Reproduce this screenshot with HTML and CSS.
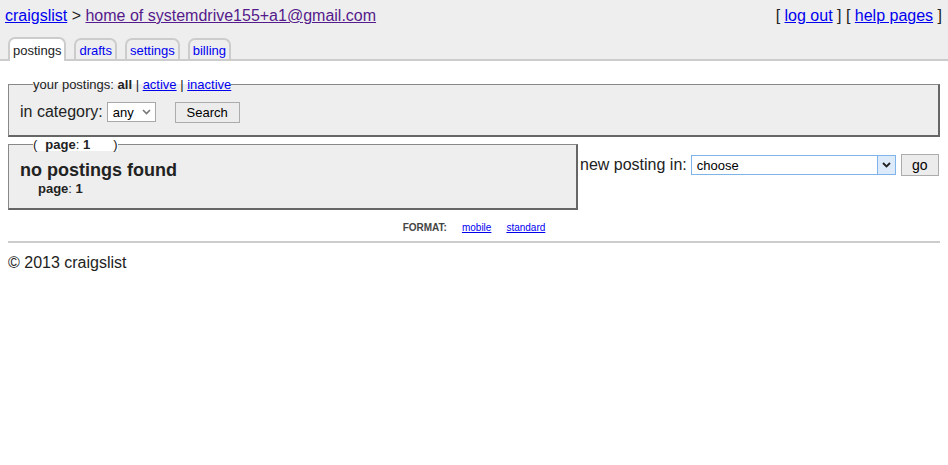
FILE: index.html
```html
<!DOCTYPE html>
<html>
<head>
<meta charset="utf-8">
<title>craigslist account</title>
<link rel="stylesheet" href="styles.css">
</head>
<body>
<div class="header">
  <div class="topbar">
    <div class="crumbs"><a class="lnk" href="#">craigslist</a> &gt; <a class="lnk visited" href="#">home of systemdrive155+a1@gmail.com</a></div>
    <div class="userlinks">[ <a class="lnk" href="#">log out</a> ] [ <a class="lnk" href="#">help pages</a> ]</div>
  </div>
  <div class="tabs">
    <a class="tab active" href="#">postings</a>
    <a class="tab" href="#">drafts</a>
    <a class="tab" href="#">settings</a>
    <a class="tab" href="#">billing</a>
  </div>
</div>
<div class="content">
  <fieldset class="box filter">
    <legend class="legend">your postings: <b>all</b> | <a class="lnk" href="#">active</a> | <a class="lnk" href="#">inactive</a></legend>
    <div class="filter-row">
      <label class="lbl">in category:</label>
      <span class="sel sel-small"><span class="sel-text">any</span><span class="sel-arrow"><svg width="9" height="6" viewBox="0 0 9 6"><path d="M1 1 L4.5 4.5 L8 1" fill="none" stroke="#777" stroke-width="1.6"/></svg></span></span>
      <button class="btn search">Search</button>
    </div>
  </fieldset>
  <div class="row">
    <fieldset class="box results">
      <legend class="legend page-legend">(<span class="pl-inner"><b>page</b>: <b>1</b></span>)</legend>
      <div class="none">no postings found</div>
      <div class="pageinfo"><b>page</b>: <b>1</b></div>
    </fieldset>
    <div class="newpost">
      <label class="lbl">new posting in:</label>
      <span class="sel sel-big"><span class="sel-text">choose</span><span class="sel-arrow blue"><svg width="9" height="6" viewBox="0 0 9 6"><path d="M1 1 L4.5 4.5 L8 1" fill="none" stroke="#222" stroke-width="1.8"/></svg></span></span>
      <button class="btn go">go</button>
    </div>
  </div>
  <div class="format"><span class="fmt-label">FORMAT:</span><a class="lnk" href="#">mobile</a><a class="lnk" href="#">standard</a></div>
  <div class="rule"></div>
  <div class="copy">&copy; 2013 craigslist</div>
</div>
</body>
</html>
```

FILE: styles.css
```css
html, body {
  margin: 0;
  padding: 0;
  background: #fff;
  font-family: "Liberation Sans", Arial, sans-serif;
  color: #222;
}
.lnk { color: #0000ee; text-decoration: underline; }
.lnk.visited { color: #551a8b; }

.header {
  background: #eee;
  border-bottom: 2px solid #ccc;
}
.topbar {
  display: flex;
  justify-content: space-between;
  padding: 6px 6px 0 5px;
  font-size: 16px;
  line-height: 20px;
  height: 38px;
  box-sizing: border-box;
}
.tabs {
  display: flex;
  gap: 8px;
  padding-left: 8px;
  height: 21px;
  align-items: flex-end;
}
.tab {
  display: block;
  font-size: 13px;
  line-height: 17px;
  padding: 2px 3px 0 3px;
  height: 21px;
  box-sizing: border-box;
  border: 2px solid #ccc;
  border-bottom: none;
  border-radius: 7px 7px 0 0;
  color: #0000ee;
  text-decoration: none;
  background: #eee;
}
.tab.active {
  background: #fff;
  color: #222;
  padding: 3px 3px 0 3px;
  margin-bottom: -2px;
  height: 24px;
}
.content {
  padding: 0 8px;
}
.box {
  background: #eee;
  border-style: solid;
  border-color: #888 #666 #666 #888;
  border-width: 1px 2px 2px 1px;
  margin: 0;
  min-width: 0;
}
.legend {
  font-size: 13px;
  line-height: 15px;
  padding: 0;
  margin-left: 13px;
}
.filter {
  margin-top: 16px;
  padding: 9px 11px 12px 11px;
}
.filter-row {
  display: flex;
  align-items: center;
  height: 22px;
}
.lbl {
  font-size: 16px;
  line-height: 20px;
  color: #222;
}
.sel {
  display: inline-flex;
  align-items: center;
  box-sizing: border-box;
  background: #fff;
  font-size: 13px;
  color: #000;
  height: 20px;
}
.sel-small {
  width: 49px;
  border: 1px solid #a8a8a8;
  margin-left: 4px;
}
.sel-text {
  flex: 1;
  padding-left: 5px;
}
.sel-arrow {
  width: 16px;
  height: 100%;
  display: flex;
  align-items: center;
  justify-content: center;
}
.sel-big {
  width: 205px;
  border: 1px solid #7eb4ea;
  margin-left: 4px;
}
.sel-arrow.blue {
  width: 17px;
  background: #dceafa;
  border-left: 1px solid #7eb4ea;
}
.btn {
  font-family: "Liberation Sans", Arial, sans-serif;
  font-size: 13px;
  color: #000;
  background: #ececec;
  border: 1px solid #acacac;
  border-radius: 0;
  padding: 0;
  box-sizing: border-box;
}
.search {
  width: 65px;
  height: 21px;
  margin-left: 19px;
}
.row {
  display: flex;
  align-items: flex-start;
  margin-top: 1px;
}
.results {
  width: 570px;
  box-sizing: border-box;
  padding: 9px 11px 11px 11px;
  flex: none;
}
.page-legend {
  background: #fff;
  line-height: 13px;
}
.pl-inner {
  padding: 0 23px 0 8px;
}
.none {
  font-size: 18px;
  font-weight: bold;
  line-height: 21px;
}
.pageinfo {
  font-size: 13px;
  line-height: 16px;
  padding-left: 18px;
}
.newpost {
  display: flex;
  align-items: center;
  padding-top: 16px;
  padding-left: 2px;
}
.go {
  width: 38px;
  height: 22px;
  margin-left: 5px;
  font-size: 14px;
}
.format {
  display: flex;
  justify-content: center;
  gap: 15px;
  font-size: 10px;
  margin-top: 12px;
  line-height: 12px;
}
.fmt-label {
  font-weight: bold;
  color: #444;
}
.rule {
  height: 2px;
  background: #ccc;
  margin-top: 7px;
}
.copy {
  font-size: 16px;
  line-height: 20px;
  margin-top: 10px;
}
```
